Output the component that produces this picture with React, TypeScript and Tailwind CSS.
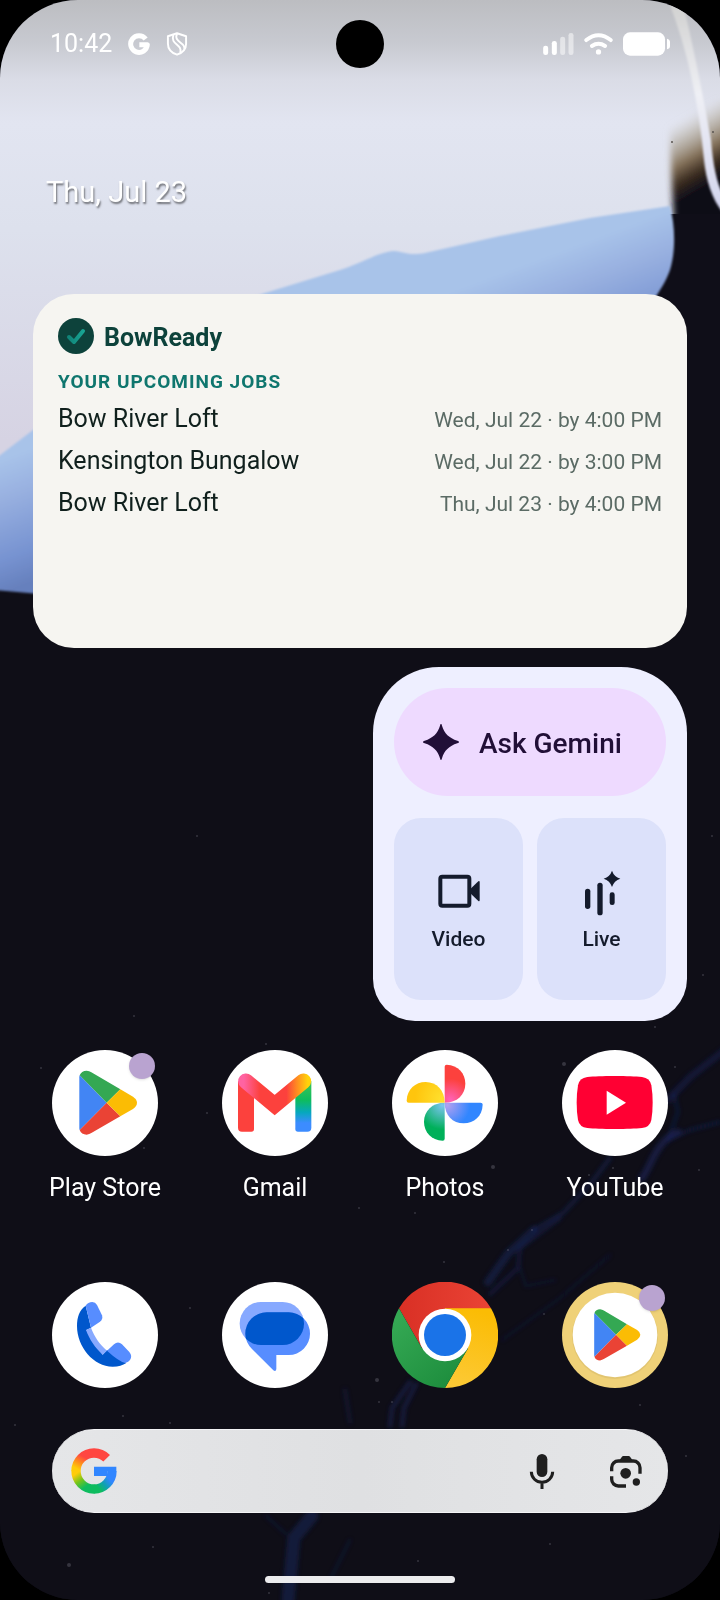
import React from 'react';

interface Job {
  name: string;
  due: string;
}

interface AppEntry {
  label: string;
  icon: React.ReactNode;
  badge?: boolean;
}

const jobs: Job[] = [
  { name: 'Bow River Loft', due: 'Wed, Jul 22 · by 4:00 PM' },
  { name: 'Kensington Bungalow', due: 'Wed, Jul 22 · by 3:00 PM' },
  { name: 'Bow River Loft', due: 'Thu, Jul 23 · by 4:00 PM' }
];

const stars = [
  [197, 836, 1], [564, 1064, 2], [675, 1067, 1], [493, 1167, 2], [589, 1175, 1], [613, 1168, 1],
  [207, 1113, 1], [144, 1148, 1], [41, 1068, 1], [266, 1044, 1], [444, 1262, 1], [377, 1380, 2],
  [392, 1402, 1], [379, 1402, 1], [190, 1308, 1], [69, 1565, 2], [153, 1547, 1], [269, 1593, 1],
  [640, 1405, 1], [686, 1456, 1], [550, 1544, 1], [418, 1561, 1], [712, 836, 1], [703, 975, 1],
  [655, 1027, 1], [134, 1016, 1], [699, 1170, 1], [123, 1416, 1], [15, 1425, 1], [170, 1423, 1],
  [508, 1250, 1], [532, 1230, 1], [359, 1208, 1], [415, 1213, 1], [544, 1314, 1]
];

const Wallpaper: React.FC = () => (
  <svg
    className="absolute inset-0 w-full h-full"
    viewBox="0 0 720 1600"
    preserveAspectRatio="xMidYMin slice"
    aria-hidden="true"
  >
    <defs>
      <linearGradient id="sky" x1="0" y1="0" x2="0" y2="440" gradientUnits="userSpaceOnUse">
        <stop offset="0" stopColor="#bcbdc1" />
        <stop offset="0.1" stopColor="#c8cad1" />
        <stop offset="0.18" stopColor="#dadce6" />
        <stop offset="0.28" stopColor="#e2e5f1" />
        <stop offset="0.52" stopColor="#dde1ed" />
        <stop offset="1" stopColor="#d6d3e3" />
      </linearGradient>
      <linearGradient id="sea" x1="160" y1="400" x2="204" y2="518" gradientUnits="userSpaceOnUse">
        <stop offset="0" stopColor="#a8c3e9" />
        <stop offset="0.3" stopColor="#98b0e0" />
        <stop offset="0.75" stopColor="#7793d1" />
        <stop offset="1" stopColor="#6680bd" />
      </linearGradient>
      <linearGradient id="rust" x1="680" y1="120" x2="715" y2="180" gradientUnits="userSpaceOnUse">
        <stop offset="0" stopColor="#c9c5bd" stopOpacity="0" />
        <stop offset="0.25" stopColor="#b5aea2" stopOpacity="0.7" />
        <stop offset="0.55" stopColor="#85725a" />
        <stop offset="0.78" stopColor="#3b2c20" />
        <stop offset="1" stopColor="#100f19" />
      </linearGradient>
      <linearGradient id="stripe" x1="0" y1="0" x2="0" y2="210" gradientUnits="userSpaceOnUse">
        <stop offset="0" stopColor="#d0d0cf" />
        <stop offset="0.45" stopColor="#eff0f5" />
        <stop offset="1" stopColor="#d3d5ef" />
      </linearGradient>
      <filter id="soft1"><feGaussianBlur stdDeviation="1" /></filter>
      <filter id="soft2" x="-20%" y="-20%" width="140%" height="140%"><feGaussianBlur stdDeviation="2" /></filter>
      <filter id="soft3" x="-20%" y="-20%" width="140%" height="140%"><feGaussianBlur stdDeviation="3" /></filter>
    </defs>

    <rect width="720" height="1600" fill="#0f0e17" />
    <path d="M0 0H720V214H668L668 300L300 500L0 560z" fill="url(#sky)" />

    {/* dark area on the right with its brown edge */}
    <path d="M668 100H760V230H674z" fill="url(#rust)" filter="url(#soft3)" />
    <path d="M673 214H740V420H600V300z" fill="#0f0e18" />
    <circle cx="672" cy="142" r="1" fill="#5a5550" />
    <circle cx="713" cy="132" r="1" fill="#5a5550" />

    <path
      d="M-5 459L33 430C120 360 190 320 265 293L340 270C365 262 378 252 394 251C404 252 410 256 425 253L500 236L590 218L670 206C675 225 676 250 670 270C664 286 655 300 630 330L300 560L40 594L-5 590z"
      fill="url(#sea)"
      filter="url(#soft1)"
    />
    <path d="M668 0H682C692 40 702 90 711 140C713 165 717 185 724 196V214C712 200 706 180 704 160C699 105 688 50 668 0z" fill="url(#stripe)" filter="url(#soft1)" />

    {/* faint blue veins */}
    <g fill="none" stroke="#1f2c74" strokeLinecap="round" filter="url(#soft2)">
      <path d="M725 1050L690 1077L668 1100" strokeWidth="7" opacity="0.35" />
      <path d="M678 1132C655 1142 652 1165 642 1178" strokeWidth="7" opacity="0.45" />
      <path d="M720 1122L690 1130L668 1140M668 1140L678 1112L674 1094" strokeWidth="3" opacity="0.4" />
      <path d="M610 1158L592 1182L563 1213L534 1230" strokeWidth="4" opacity="0.4" />
      <path d="M534 1230L508 1254L488 1282" strokeWidth="8" opacity="0.4" />
      <path d="M560 1218L520 1248L518 1268L490 1294" strokeWidth="4" opacity="0.35" />
      <path d="M520 1268L526 1286L555 1280M610 1255L560 1298L502 1340" strokeWidth="2" opacity="0.3" />
      <path d="M410 1382L392 1408L390 1426M416 1384L404 1408L402 1426" strokeWidth="4" opacity="0.45" />
      <path d="M345 1390L350 1422" strokeWidth="4" opacity="0.25" />
      <path d="M312 1516L294 1538L288 1600" strokeWidth="13" opacity="0.4" />
      <path d="M266 1516L286 1534M350 1540L330 1580" strokeWidth="2" opacity="0.35" />
    </g>
    {stars.map(([x, y, r], index) => (
      <circle key={index} cx={x} cy={y} r={r} fill="#8d8f9c" opacity="0.3" />
    ))}
  </svg>
);

const StatusBar: React.FC = () => (
  <header className="grid grid-cols-[1fr_auto_1fr] items-center h-[88px] px-[50px] text-white">
    <div className="flex items-center gap-4">
      <time className="text-[25px] leading-8">10:42</time>
      <svg className="w-[22px] h-[22px]" viewBox="0 0 66 66" fill="none" stroke="currentColor" strokeWidth="15" aria-label="Google">
        <path d="M53 18A25 25 0 1 0 58 35H34" strokeLinejoin="round" />
      </svg>
      <svg className="w-[22px] h-6" viewBox="0 0 64 74" fill="none" stroke="currentColor" strokeWidth="6" strokeLinejoin="round" aria-label="Security">
        <path d="M32 4L60 13V36C60 52 49 64 32 70C15 64 4 52 4 36V13z" />
        <path d="M21 9C10 40 50 36 42 64" />
        <path d="M32 5C20 32 62 34 54 52" />
      </svg>
    </div>
    <div className="w-12 h-12 rounded-full bg-black"></div>
    <div className="flex items-center justify-end gap-[10px]">
      <svg className="w-[31px] h-[22px]" viewBox="0 0 92 66" fill="currentColor" aria-label="Signal">
        <rect x="0" y="38" width="15" height="28" rx="7" />
        <rect x="26" y="24" width="15" height="42" rx="7" />
        <rect x="51" y="11" width="15" height="55" rx="7" opacity="0.5" />
        <rect x="76" y="0" width="15" height="66" rx="7" opacity="0.5" />
      </svg>
      <svg className="w-[29px] h-[22px]" viewBox="0 0 88 66" fill="none" stroke="currentColor" strokeWidth="12" strokeLinecap="round" aria-label="Wi-Fi">
        <path d="M7 21Q44 -8 81 21" />
        <path d="M24 39Q44 26 64 39" />
        <circle cx="44" cy="57" r="8" fill="currentColor" stroke="none" />
      </svg>
      <svg className="w-[47px] h-6" viewBox="0 0 141 72" fill="currentColor" aria-label="Battery">
        <rect x="0" y="1" width="126" height="70" rx="21" />
        <path d="M132 20Q141 22 141 30V42Q141 50 132 52z" />
      </svg>
    </div>
  </header>
);

const JobsWidget: React.FC = () => (
  <section className="col-span-2 min-h-[354px] rounded-[41px] bg-[#f6f5f1] px-[25px] pt-6">
    <div className="flex items-center gap-[10px]">
      <svg className="w-9 h-9" viewBox="0 0 36 36" aria-hidden="true">
        <defs>
          <linearGradient id="tick" x1="9" y1="0" x2="27" y2="0" gradientUnits="userSpaceOnUse">
            <stop offset="0" stopColor="#0f8075" />
            <stop offset="1" stopColor="#19a896" />
          </linearGradient>
        </defs>
        <circle cx="18" cy="18" r="18" fill="#0d423b" />
        <path d="M11 19L16 24L25 13" fill="none" stroke="url(#tick)" strokeWidth="4" strokeLinecap="round" strokeLinejoin="round" />
      </svg>
      <h2 className="text-[25px] leading-8 font-bold text-[#0d423b] pt-[3px]">BowReady</h2>
    </div>
    <h3 className="mt-4 text-[19px] leading-6 font-bold tracking-[1px] text-[#0f766e] uppercase">
      Your upcoming jobs
    </h3>
    <ul className="mt-[9px] flex flex-col gap-[9px]">
      {jobs.map((job, index) => (
        <li key={index} className="flex items-baseline justify-between">
          <span className="text-[25px] leading-8 text-[#10201d]">{job.name}</span>
          <span className="text-[21px] leading-8 text-[#5b6b65]">{job.due}</span>
        </li>
      ))}
    </ul>
  </section>
);

const GeminiWidget: React.FC = () => (
  <section className="col-start-2 flex flex-col gap-[22px] rounded-t-[66px] rounded-b-[42px] bg-[#eeefff] p-[21px]">
    <button className="flex items-center gap-5 h-[108px] rounded-full bg-[#eedaff] pl-[29px] text-[#210f37]">
      <svg className="w-9 h-9" viewBox="0 0 108 108" fill="currentColor" aria-hidden="true">
        <path d="M54 0C56 0 56 2 57 5C64 28 78 42 103 50C106 51 108 52 108 54C108 56 106 57 103 58C78 66 64 80 57 103C56 106 56 108 54 108C52 108 52 106 51 103C44 80 30 66 5 58C2 57 0 56 0 54C0 52 2 51 5 50C30 42 44 28 51 5C52 2 52 0 54 0z" />
      </svg>
      <span className="text-[28px] leading-8 font-medium pt-[3px]">Ask Gemini</span>
    </button>
    <div className="grid grid-cols-2 gap-[14px]">
      <button className="flex flex-col items-center justify-center gap-[9px] h-[182px] rounded-[27px] bg-[#dce1fa] pt-[2px] text-[#141b2c]">
        <svg className="w-12 h-12" viewBox="0 0 144 144" fill="none" stroke="currentColor" strokeWidth="12" aria-hidden="true">
          <rect x="16" y="26" width="87" height="87" rx="6" />
          <path d="M106 63L130 40Q134 37 134 43V96Q134 102 130 99L106 76z" fill="currentColor" stroke="none" />
        </svg>
        <span className="text-[21px] leading-7 font-medium">Video</span>
      </button>
      <button className="flex flex-col items-center justify-center gap-[9px] h-[182px] rounded-[27px] bg-[#dce1fa] pt-[2px] text-[#141b2c]">
        <svg className="w-12 h-12" viewBox="0 0 144 144" fill="currentColor" aria-hidden="true">
          <rect x="21" y="62" width="16" height="61" rx="8" />
          <rect x="58" y="44" width="16" height="98" rx="8" />
          <rect x="95" y="73" width="15" height="38" rx="7" />
          <path d="M102 8Q108 26 127 32Q108 38 102 57Q96 38 77 32Q96 26 102 8z" />
        </svg>
        <span className="text-[21px] leading-7 font-medium">Live</span>
      </button>
    </div>
  </section>
);

const PlayShape: React.FC = () => (
  <>
    <path d="M83 76L164 158L83 240Q82 238 82 234V82Q82 78 83 76z" fill="#4285f4" />
    <path d="M83 76Q88 62 104 62Q112 63 118 67L205 118L164 158z" fill="#34a853" />
    <path d="M83 240Q88 254 104 254Q112 253 118 249L205 199L164 158z" fill="#ea4335" />
    <path d="M205 118L243 140Q255 148 255 158Q255 168 243 177L205 199L164 158z" fill="#fbbc04" />
  </>
);

const PlayIcon: React.FC = () => (
  <svg className="w-full h-full" viewBox="0 0 318 318" aria-hidden="true">
    <circle cx="159" cy="159" r="159" fill="#fff" />
    <PlayShape />
  </svg>
);

const PlayFolderIcon: React.FC = () => (
  <svg className="w-full h-full" viewBox="0 0 318 318" aria-hidden="true">
    <circle cx="159" cy="159" r="159" fill="#efd178" />
    <circle cx="159" cy="162" r="129" fill="#d9bd6b" opacity="0.6" />
    <circle cx="159" cy="159" r="127" fill="#fff" />
    <g transform="translate(31 32) scale(0.8)">
      <PlayShape />
    </g>
  </svg>
);

const GmailIcon: React.FC = () => (
  <svg className="w-full h-full" viewBox="0 0 318 318" aria-hidden="true">
    <defs>
      <linearGradient id="gmailTop" x1="48" y1="0" x2="268" y2="0" gradientUnits="userSpaceOnUse">
        <stop offset="0.08" stopColor="#ff63a1" />
        <stop offset="0.3" stopColor="#fc413d" />
        <stop offset="0.66" stopColor="#fc413d" />
        <stop offset="0.8" stopColor="#ff8a22" />
        <stop offset="0.95" stopColor="#ffd20a" />
      </linearGradient>
      <linearGradient id="gmailRight" x1="0" y1="100" x2="0" y2="245" gradientUnits="userSpaceOnUse">
        <stop offset="0.1" stopColor="#2dc15a" />
        <stop offset="0.35" stopColor="#0ebc5f" />
        <stop offset="0.6" stopColor="#06a8bd" />
        <stop offset="0.82" stopColor="#3c8cff" />
      </linearGradient>
    </defs>
    <circle cx="159" cy="159" r="159" fill="#fff" />
    <path d="M48 94H96V237Q96 245 88 245H60Q48 245 48 233z" fill="#fc413d" />
    <path d="M220 94H268V233Q268 245 256 245H228Q220 245 220 237z" fill="url(#gmailRight)" />
    <path d="M72 94L158 165L244 94" fill="none" stroke="url(#gmailTop)" strokeWidth="47" strokeLinecap="round" />
  </svg>
);

const PhotosIcon: React.FC = () => {
  const petal = 'M158 50Q158 44 164 44C198 45 220 70 220 101C220 134 195 158 158 158z';
  return (
    <svg className="w-full h-full" viewBox="0 0 318 318" aria-hidden="true">
      <defs>
        <radialGradient id="petalRed" cx="175" cy="150" r="75" gradientUnits="userSpaceOnUse">
          <stop offset="0" stopColor="#ff63b8" />
          <stop offset="0.85" stopColor="#fc413d" />
        </radialGradient>
        <radialGradient id="petalBlue" cx="165" cy="150" r="80" gradientUnits="userSpaceOnUse">
          <stop offset="0" stopColor="#b3a0f0" />
          <stop offset="0.85" stopColor="#3186ff" />
        </radialGradient>
        <radialGradient id="petalGreen" cx="165" cy="150" r="85" gradientUnits="userSpaceOnUse">
          <stop offset="0" stopColor="#7cc4f0" />
          <stop offset="0.85" stopColor="#00b05a" />
        </radialGradient>
        <radialGradient id="petalYellow" cx="170" cy="150" r="95" gradientUnits="userSpaceOnUse">
          <stop offset="0" stopColor="#ffe02e" />
          <stop offset="0.85" stopColor="#ffc50d" />
        </radialGradient>
      </defs>
      <circle cx="159" cy="159" r="159" fill="#fff" />
      <path d={petal} fill="url(#petalRed)" />
      <path d={petal} fill="url(#petalBlue)" transform="rotate(90 158 158)" />
      <path d={petal} fill="url(#petalGreen)" transform="rotate(180 158 158)" />
      <path d={petal} fill="url(#petalYellow)" transform="rotate(270 158 158)" />
    </svg>
  );
};

const YouTubeIcon: React.FC = () => (
  <svg className="w-full h-full" viewBox="0 0 318 318" aria-hidden="true">
    <circle cx="159" cy="159" r="159" fill="#fff" />
    <path
      d="M158 78C195 78 220 79 240 81Q264 84 268 106Q272 130 272 158Q272 186 268 210Q264 231 240 234C220 236 195 237 158 237C121 237 96 236 76 234Q52 231 48 210Q44 186 44 158Q44 130 48 106Q52 84 76 81C96 79 121 78 158 78z"
      fill="#ff0033"
    />
    <path d="M134 122L192 158L134 194z" fill="#fff" />
  </svg>
);

const PhoneIcon: React.FC = () => (
  <svg className="w-full h-full" viewBox="0 0 318 318" aria-hidden="true">
    <circle cx="159" cy="159" r="159" fill="#fff" />
    <path d="M101 71C82 84 75 106 75 132C75 195 125 254 182 254C200 254 212 250 223 243L165 204L152 218L103 144L117 137z" fill="#0057cc" />
    <path d="M101 71Q108 60 121 60Q130 60 135 69L150 100Q154 112 144 119L117 137z" fill="#578dff" />
    <path d="M165 206L186 187Q198 176 210 187L232 210Q242 222 234 234Q230 240 220 243Q200 238 165 206z" fill="#578dff" />
    <path d="M102 144L117 137C128 165 143 187 165 206L152 218C130 198 112 172 102 144z" fill="#87a9ff" />
  </svg>
);

const MessagesIcon: React.FC = () => (
  <svg className="w-full h-full" viewBox="0 0 318 318" aria-hidden="true">
    <defs>
      <clipPath id="backBubble"><rect x="53" y="60" width="193" height="129" rx="64" /></clipPath>
    </defs>
    <circle cx="159" cy="159" r="159" fill="#fff" />
    <rect x="53" y="60" width="193" height="129" rx="64" fill="#87a9ff" />
    <path d="M134 91H200A64 64 0 0 1 200 219H163V261Q162 270 154 265L90 201Q70 180 70 155A64 64 0 0 1 134 91z" fill="#578dff" />
    <rect x="70" y="91" width="194" height="128" rx="64" fill="#0057cc" clipPath="url(#backBubble)" />
  </svg>
);

const ChromeIcon: React.FC = () => (
  <svg className="w-full h-full" viewBox="0 0 318 318" aria-hidden="true">
    <defs>
      <linearGradient id="chromeRed" x1="22" y1="0" x2="296" y2="0" gradientUnits="userSpaceOnUse">
        <stop offset="0" stopColor="#d93025" />
        <stop offset="1" stopColor="#ea4335" />
      </linearGradient>
      <linearGradient id="chromeYellow" x1="170" y1="300" x2="240" y2="80" gradientUnits="userSpaceOnUse">
        <stop offset="0" stopColor="#fcc934" />
        <stop offset="1" stopColor="#fbbc04" />
      </linearGradient>
      <linearGradient id="chromeGreen" x1="180" y1="300" x2="20" y2="110" gradientUnits="userSpaceOnUse">
        <stop offset="0" stopColor="#1e8e3e" />
        <stop offset="1" stopColor="#34a853" />
      </linearGradient>
    </defs>
    <path d="M159 159L90 199L21 79A159 159 0 0 1 297 79z" fill="url(#chromeRed)" />
    <path d="M159 79H297A159 159 0 0 1 159 318L228 199L159 159z" fill="url(#chromeYellow)" />
    <path d="M228 199L159 318A159 159 0 0 1 21 79L90 199L159 159z" fill="url(#chromeGreen)" />
    <circle cx="159" cy="159" r="79" fill="#fff" />
    <circle cx="159" cy="159" r="63" fill="#1a73e8" />
  </svg>
);

const apps: AppEntry[] = [
  { label: 'Play Store', icon: <PlayIcon />, badge: true },
  { label: 'Gmail', icon: <GmailIcon /> },
  { label: 'Photos', icon: <PhotosIcon /> },
  { label: 'YouTube', icon: <YouTubeIcon /> }
];

const dock: AppEntry[] = [
  { label: 'Phone', icon: <PhoneIcon /> },
  { label: 'Messages', icon: <MessagesIcon /> },
  { label: 'Chrome', icon: <ChromeIcon /> },
  { label: 'Suggested app', icon: <PlayFolderIcon />, badge: true }
];

const AppButton: React.FC<{ app: AppEntry; showLabel?: boolean }> = ({ app, showLabel }) => (
  <button className="flex flex-col items-center gap-4" aria-label={app.label}>
    <span className="relative block w-[106px] h-[106px]">
      {app.icon}
      {app.badge && (
        <span className="absolute top-[3px] right-[3px] w-[26px] h-[26px] rounded-full bg-[#b9a3d0] shadow-sm"></span>
      )}
    </span>
    {showLabel && <span className="text-[25px] leading-8 text-white whitespace-nowrap">{app.label}</span>}
  </button>
);

const GoogleLogo: React.FC = () => (
  <svg className="w-[46px] h-[46px]" viewBox="0 0 138 138" fill="none" strokeWidth="28" aria-hidden="true">
    <defs>
      <linearGradient id="gRed" x1="38" y1="26" x2="18" y2="62" gradientUnits="userSpaceOnUse">
        <stop offset="0" stopColor="#ff4641" />
        <stop offset="0.5" stopColor="#ff8a1e" />
        <stop offset="1" stopColor="#ffcc0a" />
      </linearGradient>
      <linearGradient id="gGreen" x1="14" y1="78" x2="42" y2="118" gradientUnits="userSpaceOnUse">
        <stop offset="0" stopColor="#ffcc0a" />
        <stop offset="0.5" stopColor="#74c51c" />
        <stop offset="1" stopColor="#0ebc5f" />
      </linearGradient>
      <linearGradient id="gBlue" x1="82" y1="120" x2="114" y2="92" gradientUnits="userSpaceOnUse">
        <stop offset="0" stopColor="#0ebc5f" />
        <stop offset="0.5" stopColor="#10a0b4" />
        <stop offset="1" stopColor="#3186ff" />
      </linearGradient>
    </defs>
    {/* ring of radius 54 centred on 69,69 */}
    <path d="M107 31A54 54 0 0 0 69 15A54 54 0 0 0 15 69" stroke="url(#gRed)" />
    <path d="M15 68A54 54 0 0 0 70 123" stroke="url(#gGreen)" />
    <path d="M69 123A54 54 0 0 0 123 69" stroke="url(#gBlue)" />
    <path d="M69 56H136V70H109V84H69z" fill="#3186ff" />
  </svg>
);

const SearchBar: React.FC = () => (
  <form
    className="mx-[52px] mt-[41px] flex items-center h-[84px] rounded-full border-y border-[#f4f4f6] bg-linear-to-r from-[#e5e6e8] via-[#dfe0e2] to-[#e5e6e8] pl-[19px] pr-6 text-[#1f1f1f]"
    onSubmit={(e) => e.preventDefault()}
  >
    <GoogleLogo />
    <input type="text" aria-label="Search" className="flex-1 min-w-0 h-full px-4 bg-transparent text-2xl outline-none" />
    <button type="button" aria-label="Voice search" className="mr-12">
      <svg className="w-9 h-9" viewBox="0 0 108 108" fill="none" stroke="currentColor" strokeWidth="9">
        <rect x="38" y="3" width="32" height="69" rx="16" fill="currentColor" stroke="none" />
        <path d="M22 56A32 32 0 0 0 86 56M54 88V109" />
      </svg>
    </button>
    <button type="button" aria-label="Google Lens">
      <svg className="w-9 h-9" viewBox="0 0 108 108" fill="none" stroke="currentColor" strokeWidth="10">
        <path d="M11 55V44A20 20 0 0 1 31 24H76A20 20 0 0 1 96 44V62" />
        <path d="M11 70V79A20 20 0 0 0 31 99H54" />
        <path d="M34 22L42 11Q43 9 46 9H62Q65 9 66 11L74 22z" fill="currentColor" stroke="none" />
        <circle cx="53" cy="61" r="16" fill="currentColor" stroke="none" />
        <circle cx="85" cy="87" r="11" fill="currentColor" stroke="none" />
      </svg>
    </button>
  </form>
);

const App: React.FC = () => {
  return (
    <div className="bg-black">
      <div className="relative min-h-screen overflow-hidden rounded-[78px] bg-[#0f0e17] font-['Roboto',sans-serif]">
        <Wallpaper />

        <div className="relative flex flex-col pb-[17px]">
          <StatusBar />

          <p className="mt-[88px] mb-[86px] pl-[46px] text-[29px] leading-8 text-white [text-shadow:1px_2px_2px_rgba(0,0,0,0.5)]">
            Thu, Jul 23
          </p>

          <main className="grid grid-cols-2 gap-x-[26px] gap-y-[19px] px-[33px]">
            <JobsWidget />
            <GeminiWidget />
          </main>

          {/* Home screen apps */}
          <nav className="mt-[29px] grid grid-cols-4 px-5">
            {apps.map((app) => (
              <AppButton key={app.label} app={app} showLabel />
            ))}
          </nav>

          {/* Dock */}
          <nav className="mt-[78px] grid grid-cols-4 px-5">
            {dock.map((app) => (
              <AppButton key={app.label} app={app} />
            ))}
          </nav>

          <SearchBar />

          <div className="mt-[63px] mx-auto w-[190px] h-[7px] rounded-full bg-[#ececee]"></div>
        </div>
      </div>
    </div>
  );
};

export default App;
